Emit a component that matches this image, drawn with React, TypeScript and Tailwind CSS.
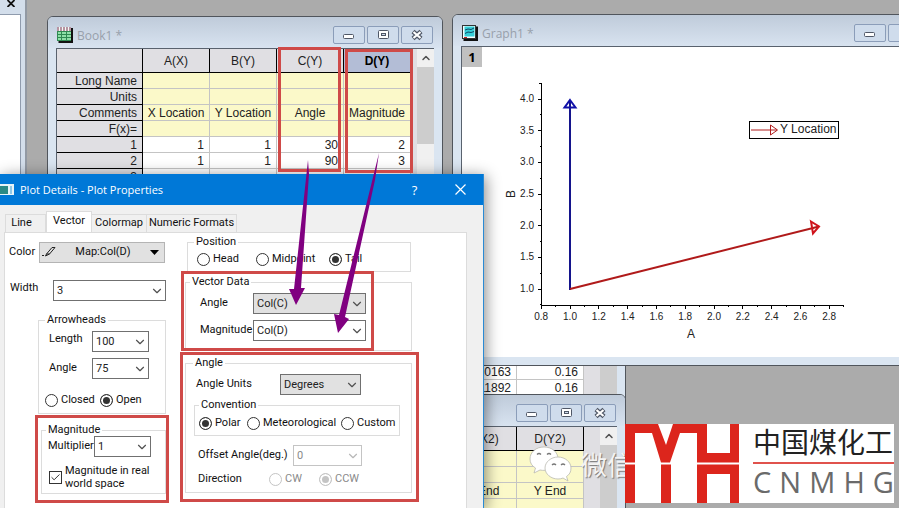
import type { ReactNode } from "react";
import { Check, ChevronDown, ChevronUp } from "lucide-react";

const UI_FONT = "font-['Roboto','Liberation_Sans',sans-serif]";
const TITLE_FONT = "font-['Open_Sans','Noto_Sans',sans-serif]";

/* ---------- MDI child windows ---------- */

function FrameButton({ label, children }: { label: string; children: ReactNode }) {
  return (
    <button
      type="button"
      aria-label={label}
      className="flex h-[18px] w-8 items-center justify-center rounded-xs border border-[#8b9db9] bg-[#cfdcec]"
    >
      <svg width="14" height="12" viewBox="0 0 14 12" fill="none">
        {children}
      </svg>
    </button>
  );
}

function ChildWindow({
  title,
  icon,
  place,
  children,
}: {
  title?: string;
  icon?: ReactNode;
  place: string;
  children: ReactNode;
}) {
  return (
    <section
      className={`absolute flex flex-col overflow-hidden rounded-t-md border border-[#50555c] bg-[#dae5f1] px-2 pb-2 ${place}`}
    >
      <header className="-mx-2 flex h-[31px] shrink-0 items-start bg-linear-to-b from-[#bfcbda] to-[#d8e3f0] pt-[9px] pr-[9px] pl-[9px]">
        <span className="pt-px">{icon}</span>
        <h2 className={`ml-1 flex-1 text-[12px] leading-5 text-[#98a0ab] ${TITLE_FONT}`}>{title}</h2>
        <div className="flex gap-[2px]">
          <FrameButton label="Minimize">
            <rect x="1.500" y="5.500" width="10" height="4" rx="1" fill="#fff" stroke="#4f5766" />
          </FrameButton>
          <FrameButton label="Maximize">
            <rect x="2.5" y="1.500" width="10" height="8" rx="1" fill="#fff" stroke="#4f5766" />
            <rect x="5.5" y="4.500" width="4" height="2" fill="#cfdcec" stroke="#4f5766" />
          </FrameButton>
          <FrameButton label="Close">
            <path d="M3 2.500l8 7M11 2.500l-8 7" stroke="#4f5766" strokeWidth="4.500" />
            <path d="M3.500 3l7 6M10.500 3l-7 6" stroke="#fff" strokeWidth="2.200" />
          </FrameButton>
        </div>
      </header>
      <div className="flex min-h-0 flex-1 overflow-hidden border-t border-l border-[#59626e] bg-white">
        {children}
      </div>
    </section>
  );
}

function BookIcon() {
  return (
    <svg width="16" height="16" viewBox="0 0 16 16" className="block">
      <rect x="1.500" y="1" width="14.500" height="15" fill="#111" />
      <rect x="0" y="0" width="14" height="14" fill="#f3fbf4" />
      <path d="M0 1h14M0 3h14" stroke="#7a2c50" strokeDasharray="2 1" />
      <path d="M0 4h14v10H0z" fill="#8fe0a8" />
      <path d="M0 4.500h14M0 7.500h14M0 10.500h14M.5 4v10M4.500 4v10M9.500 4v10M0 13.500h14" stroke="#2f8a52" />
    </svg>
  );
}

function GraphIcon() {
  return (
    <svg width="16" height="16" viewBox="0 0 16 16" className="block">
      <rect x="1.500" y="1.500" width="14.500" height="14.500" fill="#111" />
      <rect x="0.500" y="0.500" width="13" height="13" fill="#f4ffff" stroke="#333" />
      <rect x="2.500" y="1.500" width="10" height="10" fill="#35cfd8" />
      <path d="M3 5l3-1 3 .5 3-1.500M3 8.500l3-1.500 3 .5 3-1" stroke="#114a66" fill="none" />
      <path d="M2 12.500h3" stroke="#c22" />
    </svg>
  );
}

type SheetRow = { label: string; cells: string[]; meta?: boolean };

function Sheet({
  headWidth,
  columns,
  rows,
  selected,
}: {
  headWidth: string;
  columns: string[];
  rows: SheetRow[];
  selected?: number;
}) {
  return (
    <>
      <div className="min-w-0 flex-1 overflow-hidden bg-[#e0dfe3]">
        <table className="table-fixed border-separate border-spacing-0 font-['Liberation_Sans',Arial,sans-serif] text-[12px] leading-[14px] text-[#222]">
          <thead>
            <tr className="h-6">
              <th className={`border-r border-b border-black bg-[#e0dfe3] ${headWidth}`} />
              {columns.map((name, i) => (
                <th
                  key={i}
                  scope="col"
                  className={`w-[67px] min-w-[67px] border-r border-b border-black p-0 ${
                    i === selected ? "bg-[#b3bdd6] font-bold text-black" : "bg-[#e0dfe3] font-normal"
                  }`}
                >
                  {name}
                </th>
              ))}
            </tr>
          </thead>
          <tbody>
            {rows.map((row, r) => (
              <tr key={r} className="h-4">
                <th
                  scope="row"
                  className="h-4 border-r border-b border-black bg-[#e0dfe3] p-0 pt-px pr-[5px] text-right font-normal"
                >
                  {row.label}
                </th>
                {row.cells.map((cell, i) => (
                  <td
                    key={i}
                    className={`h-4 border-r border-b border-[#c4c4c4] p-0 pt-px whitespace-nowrap ${
                      row.meta ? "bg-[#fbf9c9] text-center" : "bg-white pr-[5px] text-right"
                    }`}
                  >
                    {cell}
                  </td>
                ))}
              </tr>
            ))}
          </tbody>
        </table>
      </div>
      <div className="flex w-[17px] shrink-0 flex-col bg-[#f0f0f0]">
        <ChevronUp size={12} strokeWidth={3} className="my-[3px] self-center text-[#505050]" />
        <div className="h-[77px] bg-[#cdcdcd]" />
      </div>
    </>
  );
}

/* ---------- Vector graph ---------- */

const xPos = (v: number) => 108 + (v - 1) * 144;
const yPos = (v: number) => 222 - (v - 1) * 63.3;
const X_TICKS = [0.8, 1.0, 1.2, 1.4, 1.6, 1.8, 2.0, 2.2, 2.4, 2.6, 2.8];
const Y_TICKS = [1.0, 1.5, 2.0, 2.5, 3.0, 3.5, 4.0];

function VectorPlot() {
  return (
    <svg
      width="493"
      height="288"
      viewBox="0 0 493 288"
      className="block font-['Liberation_Sans',Arial,sans-serif] text-[10px]"
      fill="#222"
    >
      <g stroke="#000" shapeRendering="crispEdges">
        <path d={`M79.500 16V238.500H${xPos(2.9)}`} fill="none" />
        <path d="M77 16.500h3" />
        {X_TICKS.map((v) => (
          <path key={v} d={`M${xPos(v)} 238v4M${xPos(v + 0.1)} 238v2`} />
        ))}
        {Y_TICKS.map((v) => (
          <path key={v} d={`M76 ${yPos(v)}h4M78 ${yPos(v - 0.25)}h2`} />
        ))}
      </g>
      {X_TICKS.map((v) => (
        <text key={v} x={xPos(v)} y="253" textAnchor="middle">
          {v.toFixed(1)}
        </text>
      ))}
      {Y_TICKS.map((v) => (
        <text key={v} x="72" y={yPos(v) + 3} textAnchor="end">
          {v.toFixed(1)}
        </text>
      ))}
      <text x="229" y="271" textAnchor="middle" className="text-[12px]">
        A
      </text>
      <text x="0" y="0" transform="translate(53 127) rotate(-90)" textAnchor="middle" className="text-[12px]">
        B
      </text>
      <g fill="none" stroke="#14148c" strokeWidth="2">
        <path d="M108 223V34" />
        <path d="M108 33l5.500 7.500h-11z" stroke="#1010a8" />
      </g>
      <g fill="none" stroke="#b01a1a" strokeWidth="2">
        <path d="M108 222L357 159.500" />
        <path d="M349 154.500l8 5-6 7z" stroke="#d0141c" />
      </g>
      <rect x="287.500" y="54.500" width="89" height="17" fill="#fff" stroke="#000" />
      <path d="M289 63h26M308.500 58v10l7-5z" stroke="#b01c1c" fill="none" />
      <text x="318" y="66" className="text-[12px]">
        Y Location
      </text>
    </svg>
  );
}

/* ---------- Dialog controls ---------- */

function Select({
  id,
  value,
  width,
  grey,
  disabled,
}: {
  id: string;
  value: string;
  width: string;
  grey?: boolean;
  disabled?: boolean;
}) {
  return (
    <span className={`grid h-[21px] shrink-0 ${width}`}>
      <select
        id={id}
        disabled={disabled}
        defaultValue={value}
        className={`col-start-1 row-start-1 w-full appearance-none border pl-[3px] text-[11px] leading-4 ${
          grey ? "border-[#999] bg-[#e1e1e1]" : "bg-white"
        } ${disabled ? "border-[#c4c4c4] text-[#8a8a8a]" : "border-[#707070] text-[#222]"}`}
      >
        <option>{value}</option>
      </select>
      <ChevronDown
        size={14}
        className={`pointer-events-none col-start-1 row-start-1 mr-[2px] self-center justify-self-end ${
          disabled ? "text-[#b8b8b8]" : "text-[#505050]"
        }`}
      />
    </span>
  );
}

function Radio({
  name,
  label,
  checked,
  disabled,
  className = "",
}: {
  name: string;
  label: string;
  checked?: boolean;
  disabled?: boolean;
  className?: string;
}) {
  return (
    <label
      className={`flex shrink-0 items-center gap-[3px] leading-[14px] ${disabled ? "text-[#8a8a8a]" : ""} ${className}`}
    >
      <input
        type="radio"
        name={name}
        defaultChecked={checked}
        disabled={disabled}
        className="size-[13px] shrink-0 appearance-none rounded-full border border-[#333] bg-white checked:bg-[#333] checked:shadow-[inset_0_0_0_2px_white] disabled:border-[#c4c4c4] disabled:checked:bg-[#c4c4c4]"
      />
      {label}
    </label>
  );
}

function Group({ title, className, children }: { title: string; className: string; children: ReactNode }) {
  return (
    <fieldset className={`border border-[#dcdcdc] ${className}`}>
      <legend className="px-[2px] leading-3">{title}</legend>
      {children}
    </fieldset>
  );
}

function Tab({ label, active, className }: { label: string; active?: boolean; className: string }) {
  return (
    <button
      type="button"
      role="tab"
      aria-selected={!!active}
      className={`border border-b-0 border-[#dcdcdc] text-center whitespace-nowrap ${
        active ? "-mb-px h-[22px] bg-white pb-[3px]" : "h-[18px] bg-[#f0f0f0]"
      } ${className}`}
    >
      {label}
    </button>
  );
}

function PlotDetails() {
  return (
    <section
      role="dialog"
      aria-label="Plot Details - Plot Properties"
      className={`absolute top-[174px] bottom-0 left-0 flex w-[484px] flex-col border-r border-[#2a8ad4] bg-[#f0f0f0] text-[11px] text-[#111] shadow-[2px_2px_14px_rgba(0,0,0,0.45)] ${UI_FONT}`}
    >
      <header className="flex h-[31px] shrink-0 items-center bg-[#0078d7] text-white">
        <svg width="14" height="11" viewBox="0 0 14 11" className="shrink-0">
          <rect width="14" height="11" fill="#e8f4f8" />
          <rect x="0" y="2" width="8" height="8" fill="#2b8a86" />
          <rect x="10" y="2" width="2" height="8" fill="#8fc9e8" />
        </svg>
        <h1 className={`ml-[6px] flex-1 text-[11px] leading-4 ${TITLE_FONT}`}>Plot Details - Plot Properties</h1>
        <button type="button" className={`w-[45px] text-[13px] leading-4 ${TITLE_FONT}`}>
          ?
        </button>
        <button type="button" aria-label="Close" className="flex w-[46px] justify-center">
          <svg width="11" height="11" viewBox="0 0 11 11" stroke="#fff" strokeWidth="1.200">
            <path d="M.5.5l10 10M10.500.5l-10 10" />
          </svg>
        </button>
      </header>

      <div role="tablist" className="flex h-[27px] shrink-0 items-end pl-[5px]">
        <Tab label="Line" className="w-[41px] pr-2" />
        <Tab label="Vector" active className="w-[46px]" />
        <Tab label="Colormap" className="w-[55px] border-l-0" />
        <Tab label="Numeric Formats" className="w-[90px] border-l-0" />
      </div>

      <div className="mr-4 ml-1 flex min-h-0 flex-1 overflow-hidden border border-b-0 border-[#dcdcdc] bg-white">
        <div className="w-[175px] shrink-0 pt-[9px]">
          <div className="flex items-center pl-1">
            <label htmlFor="color" className="w-[30px]">
              Color
            </label>
            <button
              id="color"
              type="button"
              className="flex h-[21px] w-[126px] items-center border border-[#b4b4b4] bg-[#e1e1e1] px-[2px]"
            >
              <svg width="14" height="14" viewBox="0 0 14 14" fill="none" stroke="#222" className="shrink-0">
                <path d="M4.500 8L10 1.500h3L7.500 8zM4.500 8l-1 2 4-2M0 9.500h2" />
              </svg>
              <span className="flex-1 text-center">Map:Col(D)</span>
              <svg width="9" height="5" viewBox="0 0 9 5" className="mr-[3px] shrink-0">
                <path d="M0 0h9L4.500 5z" fill="#000" />
              </svg>
            </button>
          </div>

          <div className="mt-[17px] flex items-start pl-[5px]">
            <label htmlFor="width" className="w-[43px] leading-4">
              Width
            </label>
            <Select id="width" value="3" width="w-[113px]" />
          </div>

          <Group title="Arrowheads" className="mt-[13px] ml-[33px] h-[100px] w-[128px] pl-[6px]">
            <div className="mt-[5px] flex items-start pl-1">
              <label htmlFor="length" className="w-[43px] leading-4">
                Length
              </label>
              <Select id="length" value="100" width="w-[57px]" />
            </div>
            <div className="mt-[6px] flex items-center pl-1">
              <label htmlFor="head-angle" className="w-[43px]">
                Angle
              </label>
              <Select id="head-angle" value="75" width="w-[57px]" />
            </div>
            <div className="mt-[14px] flex">
              <Radio name="arrow" label="Closed" className="w-[55px]" />
              <Radio name="arrow" label="Open" checked />
            </div>
          </Group>

          <Group title="Magnitude" className="mt-[10px] ml-[36px] h-[70px] w-[125px] pl-[4px]">
            <div className="flex items-center">
              <label htmlFor="multiplier" className="w-[48px] pl-[2px]">
                Multiplier
              </label>
              <Select id="multiplier" value="1" width="w-[57px]" />
            </div>
            <label className="mt-[7px] flex items-center gap-[3px] pl-[3px] leading-[13px]">
              <span className="grid size-[13px] shrink-0">
                <input
                  type="checkbox"
                  defaultChecked
                  className="col-start-1 row-start-1 size-[13px] appearance-none border border-[#333] bg-white"
                />
                <Check size={11} className="pointer-events-none col-start-1 row-start-1 place-self-center text-[#222]" />
              </span>
              <span>
                Magnitude in real
                <br />
                world space
              </span>
            </label>
          </Group>
        </div>

        <div className="w-[232px] shrink-0 pt-[3px]">
          <Group title="Position" className="ml-[7px] h-[36px] w-[224px] pl-[6px]">
            <div className="mt-[4px] flex pl-[3px]">
              <Radio name="position" label="Head" className="w-[59px]" />
              <Radio name="position" label="Midpoint" className="w-[73px]" />
              <Radio name="position" label="Tail" checked />
            </div>
          </Group>

          <Group title="Vector Data" className="mt-[4px] ml-[5px] h-[75px] w-[227px] pl-1">
            <div className="mt-[5px] flex items-center pl-[10px]">
              <label htmlFor="vec-angle" className="w-[53px]">
                Angle
              </label>
              <Select id="vec-angle" value="Col(C)" width="w-[113px]" grey />
            </div>
            <div className="mt-[6px] flex items-center pl-[10px]">
              <label htmlFor="vec-mag" className="w-[53px]">
                Magnitude
              </label>
              <Select id="vec-mag" value="Col(D)" width="w-[113px]" />
            </div>
          </Group>

          <Group title="Angle" className="mt-[6px] ml-[5px] h-[136px] w-[227px] pl-[7px]">
            <div className="mt-[5px] flex items-center pl-[3px]">
              <label htmlFor="units" className="w-[84px]">
                Angle Units
              </label>
              <Select id="units" value="Degrees" width="w-[81px]" grey />
            </div>
            <Group title="Convention" className="mt-[4px] ml-px h-[37px] w-[206px] pl-[4px]">
              <div className="mt-[5px] flex">
                <Radio name="convention" label="Polar" checked className="w-[48px]" />
                <Radio name="convention" label="Meteorological" className="w-[94px]" />
                <Radio name="convention" label="Custom" />
              </div>
            </Group>
            <div className="mt-[9px] flex items-center pl-[5px]">
              <label htmlFor="offset" className="w-[95px] whitespace-nowrap">
                Offset Angle(deg.)
              </label>
              <Select id="offset" value="0" width="w-[69px]" disabled />
            </div>
            <div className="mt-[5px] flex items-center pl-[5px]">
              <span className="w-[71px] leading-4">Direction</span>
              <Radio name="direction" label="CW" disabled className="w-[50px]" />
              <Radio name="direction" label="CCW" checked disabled />
            </div>
          </Group>
        </div>
      </div>
    </section>
  );
}

/* ---------- Overlays ---------- */

function Callouts() {
  return (
    <svg width="899" height="508" viewBox="0 0 899 508" className="pointer-events-none absolute top-0 left-0">
      <g fill="none" stroke="#cf4a48" strokeWidth="3">
        <path d="M279.500 48.500h60v122h-60zM346.500 50.500h65v121h-65z" />
        <path d="M182.500 272.500h190v77h-190zM181.500 353.500h236v147h-236zM36.500 416.500h131v85h-131z" />
      </g>
      <g fill="#800080">
        <path d="M308 160L309 174 301 288 305 288 296 305 289 289 294 289z" />
        <path d="M379 153L375 180 345 317 349 319 338 333 334 314 339 315z" />
      </g>
    </svg>
  );
}

function WeChatMark() {
  return (
    <div className="absolute top-[446px] left-[529px] flex items-start gap-[8px]">
      <svg width="44" height="36" viewBox="0 0 44 36">
        <g fill="#fff" stroke="#b9b9b0" strokeWidth="0.800">
          <path d="M15 1C7 1 1 6 1 13c0 4 2 7 5.500 9L5 27l6-3c6 1.500 18-1 18-11C29 6 23 1 15 1z" />
          <path d="M29 11c-7 0-13 5-13 11s6 11 13 11c2 0 3.500-.3 5-1l5 3-1.500-4.500C40.500 28.500 42 26 42 22c0-6-6-11-13-11z" />
        </g>
        <g fill="none" stroke="#777" strokeWidth="1.300">
          <path d="M8 8.500q2-2 4 0M18 8.500q2-2 4 0M23 19q2-2 4 0M32 19q2-2 4 0" />
        </g>
      </svg>
      <span className="mt-[2px] font-['Noto_Sans_CJK_SC',sans-serif] text-[26px] leading-8 whitespace-nowrap text-[#f4f4f4] [text-shadow:1px_1px_1px_#777]">
        微信
      </span>
    </div>
  );
}

function CompanyLogo() {
  return (
    <div className="absolute top-[424px] left-[625px] flex h-[79px] w-[269px] bg-white">
      <svg width="114" height="79" viewBox="0 0 114 79" fill="#dc251c" className="shrink-0">
        <path d="M0 0H33L41 21 48 0H82V29H105V0H114V38.500H72V9H55L45 38.500H36L27 9H10V38.500H0z" />
        <path d="M0 40.500H10V79H0zM36 40.500H46V79H36zM72 40.500H114V79H105V50H82V79H72z" />
      </svg>
      <div className="ml-[14px] w-[141px] shrink-0">
        <p className="h-10 border-b-2 border-[#e0524c] pt-[2px] font-['Noto_Sans_CJK_SC',sans-serif] text-[28px] leading-[30px] whitespace-nowrap text-[#222]">
          中国煤化工
        </p>
        <p className={`flex justify-between pt-[2px] text-[29px] leading-[32px] text-[#6a6a6a] ${TITLE_FONT}`}>
          {["C", "N", "M", "H", "G"].map((c) => (
            <span key={c}>{c}</span>
          ))}
        </p>
      </div>
    </div>
  );
}

/* ---------- Workspace ---------- */

const empty = ["", "", "", ""];

export default function App() {
  return (
    <main className="relative h-screen min-h-[508px] overflow-hidden bg-[#ababab]">
      <aside className="absolute top-0 left-0 flex h-full w-[27px] flex-col border-r-2 border-[#9299a3] bg-[#d3deeb]">
        <button type="button" aria-label="Close panel" className="flex h-[14px] items-start justify-end pr-[10px]">
          <svg width="8" height="7" viewBox="0 0 8 7" stroke="#111" strokeWidth="1.800">
            <path d="M.5 0l7 7M7.500 0l-7 7" />
          </svg>
        </button>
        <div className="mr-1 flex-1 border-t border-r border-[#8f9bad] bg-white" />
      </aside>

      <ChildWindow place="top-[275px] left-[230px] h-[200px] w-[396px]">
        <Sheet
          headWidth="w-[76px] min-w-[76px]"
          columns={empty}
          rows={[
            { label: "", cells: empty },
            { label: "", cells: empty },
            { label: "", cells: ["", "", "0.10163", "0.16"] },
            { label: "", cells: ["", "", "0.11892", "0.16"] },
          ]}
        />
      </ChildWindow>

      <ChildWindow title="Book1 *" icon={<BookIcon />} place="top-[16px] left-[47px] h-[240px] w-[396px]">
        <Sheet
          headWidth="w-[86px] min-w-[86px]"
          columns={["A(X)", "B(Y)", "C(Y)", "D(Y)"]}
          selected={3}
          rows={[
            { label: "Long Name", cells: empty, meta: true },
            { label: "Units", cells: empty, meta: true },
            { label: "Comments", cells: ["X Location", "Y Location", "Angle", "Magnitude"], meta: true },
            { label: "F(x)=", cells: empty, meta: true },
            { label: "1", cells: ["1", "1", "30", "2"] },
            { label: "2", cells: ["1", "1", "90", "3"] },
            { label: "3", cells: empty },
          ]}
        />
      </ChildWindow>

      <ChildWindow title="Graph1 *" icon={<GraphIcon />} place="top-[14px] left-[452px] h-[352px] w-[512px]">
        <div className="w-full">
          <div className="flex size-5 items-center justify-center bg-[#c0c0c0] font-['Open_Sans',sans-serif] text-[13px] leading-4 font-bold text-black">
            1
          </div>
          <VectorPlot />
        </div>
      </ChildWindow>

      <ChildWindow place="top-[394px] left-[230px] h-[200px] w-[396px]">
        <Sheet
          headWidth="w-[76px] min-w-[76px]"
          columns={["", "", "C(X2)", "D(Y2)"]}
          rows={[
            { label: "", cells: empty, meta: true },
            { label: "", cells: empty, meta: true },
            { label: "", cells: ["", "", "X End", "Y End"], meta: true },
            { label: "", cells: empty, meta: true },
          ]}
        />
      </ChildWindow>

      <PlotDetails />
      <WeChatMark />
      <CompanyLogo />
      <Callouts />
    </main>
  );
}
